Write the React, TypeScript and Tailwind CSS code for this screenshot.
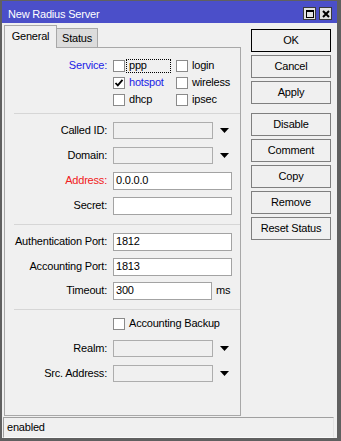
import React from 'react';

const font = "font-['Liberation_Sans',Arial,sans-serif]";

const Check: React.FC<{ checked?: boolean }> = ({ checked }) => (
  <div className="w-[12px] h-[12px] shrink-0 bg-white border border-[#8a8a8a] flex items-center justify-center">
    {checked && (
      <svg width="10" height="10" viewBox="0 0 10 10">
        <path d="M1.5 5 L3.8 7.4 L8.5 1.8" fill="none" stroke="#000" strokeWidth="1.8" />
      </svg>
    )}
  </div>
);

const ServiceOpt: React.FC<{ label: string; checked?: boolean; focus?: boolean; blue?: boolean }> = ({
  label,
  checked,
  focus,
  blue,
}) => (
  <div className="flex items-center h-[17px]">
    <Check checked={checked} />
    <span
      className={`ml-[1px] w-[45px] h-[14px] px-[2px] flex items-center border ${
        focus ? 'border-dotted border-black' : 'border-transparent'
      } ${blue ? 'text-[#1c1ce6]' : ''}`}
    >
      {label}
    </span>
  </div>
);

const Arrow = () => (
  <svg width="9" height="5" viewBox="0 0 9 5" className="ml-[7px]">
    <path d="M0 0 H9 L4.5 5 Z" fill="#000" />
  </svg>
);

const Row: React.FC<{ label: string; red?: boolean; className?: string; children: React.ReactNode }> = ({
  label,
  red,
  className = 'mt-[8px]',
  children,
}) => (
  <div className={`flex items-center h-[17px] ${className}`}>
    <div className={`w-[102px] text-right ${red ? 'text-[#f02020]' : ''}`}>{label}</div>
    <div className="ml-[6px] flex items-center">{children}</div>
  </div>
);

const Combo = () => <div className="w-[100px] h-[17px] border border-[#adadad] bg-[#f0f0f0]" />;

const Input: React.FC<{ value?: string; w?: string }> = ({ value = '', w = 'w-[119px]' }) => (
  <div className={`${w} h-[18px] border border-[#a3a3a3] bg-white pl-[2px] flex items-center`}>{value}</div>
);

const Sep: React.FC<{ className: string }> = ({ className }) => (
  <div className={`ml-[9px] border-t border-[#d6d6d6] ${className}`} />
);

const Btn: React.FC<{ label: string; primary?: boolean; className?: string }> = ({ label, primary, className = 'mt-[3px]' }) => (
  <div
    className={`w-[80px] h-[23px] flex items-center justify-center border bg-[#f0f0f0] ${
      primary ? 'border-black' : 'border-[#7f7f7f]'
    } ${className}`}
  >
    {label}
  </div>
);

export default function App() {
  return (
    <div
      className={`${font} text-[11px] tracking-[-0.2px] text-black w-[341px] h-[441px] flex flex-col border-t border-l-2 border-r-4 border-b-[3px] border-[#606060] bg-[#f0f0f0]`}
    >
      {/* title bar */}
      <div className="h-[22px] shrink-0 bg-[#4b4fc9] flex items-center pl-[6px] pr-[5px]">
        <span className="text-white text-[11px] pt-[4px] flex-1">New Radius Server</span>
        <div className="flex gap-[3px] mt-[3px]">
          <div className="w-[13px] h-[13px] bg-[#e2e2e2] border border-[#3a3a3a] flex items-center justify-center">
            <div className="w-[8px] h-[8px] border border-black border-t-2" />
          </div>
          <div className="w-[13px] h-[13px] bg-[#e2e2e2] border border-[#3a3a3a] flex items-center justify-center">
            <svg width="8" height="8" viewBox="0 0 8 8">
              <path d="M1 1 L7 7 M7 1 L1 7" stroke="#000" strokeWidth="2" />
            </svg>
          </div>
        </div>
      </div>

      {/* main */}
      <div className="flex h-[393px]">
        <div className="pl-[2px] w-[239px] flex flex-col">
          <div className="h-[24px] flex items-end">
            <div className="relative z-10 -mb-px w-[53px] h-[23px] bg-[#f0f0f0] border-t border-l border-r border-[#a8a8a8] flex items-center justify-center pb-[2px]">
              General
            </div>
            <div className="w-[41px] h-[19px] bg-[#dcdcdc] border-t border-r border-[#a8a8a8] flex items-center justify-center">
              Status
            </div>
          </div>
          <div className="h-[369px] w-[237px] border border-[#a8a8a8] pt-[9px]">
            {/* service */}
            <div className="flex">
              <div className="w-[102px] h-[17px] flex items-center justify-end text-[#1c1ce6]">Service:</div>
              <div className="ml-[6px] grid grid-cols-[63px_auto]">
                <ServiceOpt label="ppp" focus />
                <ServiceOpt label="login" />
                <ServiceOpt label="hotspot" checked blue />
                <ServiceOpt label="wireless" />
                <ServiceOpt label="dhcp" />
                <ServiceOpt label="ipsec" />
              </div>
            </div>
            <Sep className="mt-[5px]" />
            <Row label="Called ID:">
              <Combo />
              <Arrow />
            </Row>
            <Row label="Domain:">
              <Combo />
              <Arrow />
            </Row>
            <Row label="Address:" red>
              <Input value="0.0.0.0" />
            </Row>
            <Row label="Secret:">
              <Input />
            </Row>
            <Sep className="mt-[10px]" />
            <Row label="Authentication Port:">
              <Input value="1812" />
            </Row>
            <Row label="Accounting Port:">
              <Input value="1813" />
            </Row>
            <Row label="Timeout:" className="mt-[7px]">
              <Input value="300" w="w-[99px]" />
              <span className="ml-[4px]">ms</span>
            </Row>
            <Sep className="mt-[10px]" />
            <Row label="" className="mt-[5px]">
              <Check />
              <span className="ml-[4px]">Accounting Backup</span>
            </Row>
            <Row label="Realm:">
              <Combo />
              <Arrow />
            </Row>
            <Row label="Src. Address:">
              <Combo />
              <Arrow />
            </Row>
          </div>
        </div>

        <div className="ml-[10px] pt-[6px] flex flex-col">
          <Btn label="OK" primary className="" />
          <Btn label="Cancel" />
          <Btn label="Apply" />
          <Btn label="Disable" className="mt-[9px]" />
          <Btn label="Comment" />
          <Btn label="Copy" />
          <Btn label="Remove" />
          <Btn label="Reset Status" />
        </div>
      </div>

      {/* status bar */}
      <div className="h-[22px] pt-[1px]">
        <div className="ml-[1px] w-[331px] h-[21px] border-t border-l border-[#a0a0a0] border-r border-r-[#e2e2e2] border-b border-b-[#fafafa] pl-[3px] flex items-center">
          enabled
        </div>
      </div>
    </div>
  );
}
